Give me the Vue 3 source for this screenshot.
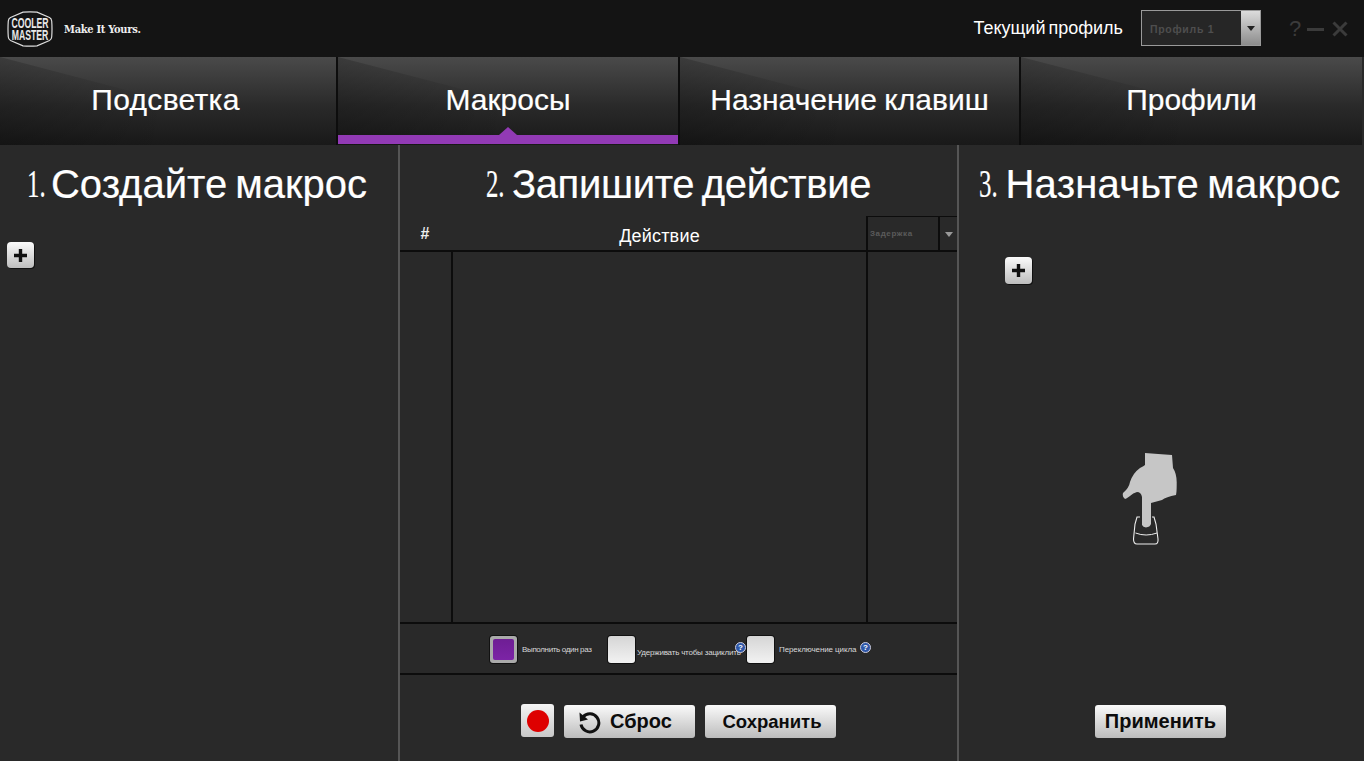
<script setup>
const tabs = [
  { label: 'Подсветка', cls: 't1' },
  { label: 'Макросы', cls: 't2', active: true },
  { label: 'Назначение клавиш', cls: 't3' },
  { label: 'Профили', cls: 't4' }
]
</script>

<template>
  <div class="app">
    <header class="top">
      <svg class="logo" viewBox="0 0 46 36" width="46" height="36">
        <path d="M16 1.200Q23 .4 30 1.200L42.500 6.500Q44.500 7.500 44.700 10 45.300 18 44.700 26 44.500 28.500 42.500 29.500L30 34.800Q23 35.600 16 34.800L3.500 29.500Q1.500 28.500 1.300 26 .7 18 1.300 10 1.500 7.500 3.500 6.500Z" fill="none" stroke="#ddd" stroke-width="1.200"/>
        <text transform="translate(23 16.500) scale(.56 1)" text-anchor="middle" class="logo-t">COOLER</text>
        <text transform="translate(23 28.500) scale(.56 1)" text-anchor="middle" class="logo-t">MASTER</text>
      </svg>
      <span class="slogan">Make It Yours.</span>
      <span class="spacer"></span>
      <span class="cur">Текущий профиль</span>
      <div class="select">
        <span class="sel-text">Профиль 1</span>
        <span class="sel-btn"><i class="tri"></i></span>
      </div>
      <div class="winbtns">
        <span class="q">?</span>
        <svg width="18" height="18" viewBox="0 0 18 18"><rect x="0" y="8" width="17" height="3" fill="#3b3b3b"/></svg>
        <svg class="xicon" width="16" height="18" viewBox="0 0 16 18"><path d="M1.500 2.500 14.500 15.500M14.500 2.500 1.500 15.500" stroke="#3b3b3b" stroke-width="3"/></svg>
      </div>
    </header>

    <nav class="tabs">
      <div v-for="t in tabs" :key="t.label" class="tab" :class="[t.cls, { active: t.active }]">
        <span class="tab-label">{{ t.label }}</span>
        <i v-if="t.active" class="notch"></i>
      </div>
    </nav>

    <main class="cols">
      <section class="col left">
        <h2 class="head"><span class="num">1.</span><span>Создайте макрос</span></h2>
        <button class="plus plus-left"><svg width="15" height="15" viewBox="0 0 15 15"><path d="M5.800 1h3.400v4.800H14v3.400H9.200V14H5.800V9.200H1V5.800h4.800Z" fill="#111"/></svg></button>
      </section>

      <section class="col mid">
        <h2 class="head"><span class="num">2.</span><span>Запишите действие</span></h2>
        <div class="thead">
          <span class="th-num">#</span>
          <span class="th-act">Действие</span>
          <div class="th-delay">
            <span class="delay-text">Задержка</span>
            <span class="delay-btn"><i class="tri small"></i></span>
          </div>
        </div>
        <div class="tbody">
          <div class="c-num"></div>
          <div class="c-act"></div>
          <div class="c-delay"></div>
        </div>
        <div class="opts">
          <span class="check on"><i></i></span>
          <span class="opt-t o1">Выполнить один раз</span>
          <span class="check"></span>
          <span class="opt-t o2">Удерживать чтобы зациклить</span>
          <span class="help h1">?</span>
          <span class="check c3"></span>
          <span class="opt-t o3">Переключение цикла</span>
          <span class="help h2">?</span>
        </div>
        <div class="actions">
          <button class="btn rec"><i></i></button>
          <button class="btn wide reset">
            <svg width="24" height="24" viewBox="0 0 24 24"><path d="M6 7A9 9 0 1 1 4 14.500" fill="none" stroke="#111" stroke-width="3"/><path d="M2.500 2.500 3 11.500 11 9.500Z" fill="#111"/></svg>
            <span>Сброс</span>
          </button>
          <button class="btn wide save">Сохранить</button>
        </div>
      </section>

      <section class="col right">
        <h2 class="head"><span class="num">3.</span><span>Назначьте макрос</span></h2>
        <button class="plus plus-right"><svg width="15" height="15" viewBox="0 0 15 15"><path d="M5.800 1h3.400v4.800H14v3.400H9.200V14H5.800V9.200H1V5.800h4.800Z" fill="#111"/></svg></button>
        <svg class="hand" width="100" height="120" viewBox="0 0 100 120">
          <path d="M40 77 37 77 35 84 33.500 99Q33.500 104 37 104H55Q58.500 104 58 99L56 84 54 77 52 77" fill="none" stroke="#eee" stroke-width="1.100"/>
          <path d="M35.500 93Q46 97 57 93" fill="none" stroke="#eee" stroke-width="1"/>
          <path d="M45 13Q58 14 72 15L73 28Q77 34 76.700 44 76.700 52 76 55 66 57 62 60L51 63 51 84Q50 87 46 87.500 43 87 42 85L42 57Q41 52 37 52 33 53 30 56 26 59 25 59 22 57 23 53 29 48 30 42 33 33 40 28 44 26 45 25Z" fill="#c6c6c6"/>
        </svg>
        <button class="btn wide apply">Применить</button>
      </section>
    </main>
  </div>
</template>

<style>
html, body { margin: 0; background: #292929; overflow: hidden; }
</style>

<style scoped>
.app { width: 1364px; height: 761px; display: flex; flex-direction: column; background: #292929; font-family: "Liberation Sans", Arial, sans-serif; color: #fff; overflow: hidden; }
.top { height: 57px; flex: none; display: flex; align-items: center; background: #141414; padding-left: 7px; box-sizing: border-box; }
.logo { flex: none; margin-right: 11px; margin-top: 1px; }
.logo-t { font: bold 15.500px "Liberation Sans", sans-serif; fill: #e8e8e8; }
.slogan { font: bold 11px "DejaVu Serif", serif; font-stretch: condensed; color: #eee; margin-top: 1px; letter-spacing: -.3px; white-space: nowrap; }
.spacer { flex: 1; }
.cur { font-size: 18px; word-spacing: -2px; margin-right: 18px; color: #fff; }
.select { width: 120px; height: 36px; box-sizing: border-box; border: 1px solid #9a9a9a; display: flex; align-items: stretch; background: #262626; margin-top: -1px; }
.sel-text { flex: 1; padding-left: 8px; font-size: 10.5px; font-weight: bold; color: #4e4e4e; letter-spacing: .7px; line-height: 36px; }
.sel-btn { width: 19px; background: linear-gradient(#dcdcdc, #8c8c8c); display: flex; align-items: center; justify-content: center; }
.tri { display: block; width: 0; height: 0; border-left: 4px solid transparent; border-right: 4px solid transparent; border-top: 5px solid #222; }
.tri.small { border-top-color: #999; }
.winbtns { display: flex; align-items: center; gap: 3px; width: 103px; padding-left: 28px; box-sizing: border-box; }
.q { font-size: 22px; color: #3b3b3b; width: 15px; }
.xicon { margin-left: 4px; }

.tabs { height: 88px; flex: none; display: flex; width: 1362px; gap: 2px; background: #0d0d0d; }
.tab { position: relative; flex: none; box-sizing: border-box; display: flex; align-items: center; justify-content: center; background: linear-gradient(#4a4a4a, #2a2a2a 55%, #191919); overflow: hidden; padding-bottom: 2px; }
.tab::before { content: ""; position: absolute; inset: 0 50% 0 0; background: linear-gradient(to right, rgba(0,0,0,.2), transparent); clip-path: polygon(0 0, 100% 50%, 100% 100%, 0 100%); }
.t1 { width: 336px; padding-right: 5px; }
.t2 { width: 340px; }
.t3 { width: 339px; }
.t4 { width: 341px; }
.tab-label { position: relative; font-size: 30px; word-spacing: -1px; -webkit-text-stroke: .2px #fff; }
.t1 .tab-label { letter-spacing: .3px; }
.active::after { content: ""; position: absolute; left: 0; right: 0; bottom: 1px; height: 9px; background: #923ab5; }
.notch { position: absolute; left: 50%; margin-left: -9px; bottom: 10px; border-left: 9px solid transparent; border-right: 9px solid transparent; border-bottom: 8px solid #923ab5; }

.cols { flex: 1; display: flex; min-height: 0; }
.col { display: flex; flex-direction: column; box-sizing: border-box; position: relative; }
.left { width: 400px; border-right: 2px solid #555; padding-left: 7px; }
.mid { width: 559px; border-right: 2px solid #555; }
.right { flex: 1; }
.head { margin: 0; height: 71px; display: flex; justify-content: center; line-height: 78px; font-size: 40px; font-weight: normal; word-spacing: -3px; white-space: nowrap; flex: none; -webkit-text-stroke: .2px #fff; }
.left .head { margin-left: -7px; padding-right: 4px; }
.mid .head { letter-spacing: -.35px; }
.right .head { letter-spacing: .25px; padding-right: 3px; }
.num { font-family: "Liberation Serif", serif; width: 24px; display: block; transform: scaleX(.62); transform-origin: left center; }
.mid .num, .right .num { width: 26px; }
.plus { width: 27px; height: 26px; padding: 0; border: 0; border-radius: 4px; background: linear-gradient(#fbfbfb, #bdbdbd); box-shadow: 1px 1px 0 #111; display: flex; align-items: center; justify-content: center; }
.plus-left { margin-top: 26px; }
.plus-right { margin: 41px 0 0 46px; height: 27px; }

.thead { height: 36px; flex: none; display: flex; box-sizing: border-box; border-bottom: 2px solid #0c0c0c; align-items: stretch; }
.th-num { width: 52px; text-align: center; line-height: 35px; font-size: 16px; font-weight: bold; color: #eee; margin-left: -1px; }
.th-act { width: 415px; text-align: center; line-height: 40px; font-size: 18px; letter-spacing: .2px; padding-left: 2px; box-sizing: border-box; }
.th-delay { flex: 1; display: flex; border-left: 2px solid #0c0c0c; border-top: 1px solid #0c0c0c; }
.delay-text { width: 68px; border-right: 2px solid #0c0c0c; padding-left: 2px; font-size: 8px; font-weight: bold; color: #5b5b5b; letter-spacing: .6px; line-height: 33px; }
.delay-btn { flex: 1; display: flex; align-items: center; justify-content: center; padding-top: 2px; }
.tbody { flex: 1; display: flex; min-height: 0; }
.c-num { width: 51px; border-right: 2px solid #0c0c0c; }
.c-act { width: 413px; border-right: 2px solid #0c0c0c; }
.c-delay { flex: 1; }

.opts { height: 53px; flex: none; box-sizing: border-box; border-top: 2px solid #0c0c0c; border-bottom: 2px solid #0c0c0c; display: flex; align-items: center; padding-left: 90px; }
.check { width: 27px; height: 27px; flex: none; box-sizing: border-box; border-radius: 3px; background: linear-gradient(#d5d5d5, #f2f2f2); box-shadow: 0 0 0 1px #111; margin-top: 1px; }
.check.on { background: #aaa; padding: 3px; }
.check.on i { display: block; height: 100%; background: linear-gradient(#6e1e94, #7c24a6); border-radius: 2px; }
.opt-t { font-size: 8px; color: #d8d8d8; white-space: nowrap; }
.o1 { margin: 1px 15px 0 5px; width: 71px; letter-spacing: -.35px; }
.o2 { margin: 7px 0 0 2px; width: 98px; letter-spacing: -.2px; }
.o3 { margin: 1px 0 0 5px; width: 79px; letter-spacing: -.1px; }
.help { width: 11px; height: 11px; flex: none; border-radius: 50%; background: #2e57a8; border: 1px solid #ccd; box-sizing: border-box; font-size: 8px; font-weight: bold; line-height: 9px; text-align: center; color: #fff; margin-top: -2px; }
.h1 { margin-right: 1px; }
.h2 { margin-left: 2px; }

.actions { height: 86px; flex: none; display: flex; align-items: flex-start; padding: 30px 0 0 121px; box-sizing: border-box; gap: 10px; }
.btn { padding: 0; border: 0; border-radius: 3px; background: linear-gradient(#fafafa, #bcbcbc); color: #0c0c0c; font: bold 18.500px "Liberation Sans", sans-serif; height: 33px; display: flex; align-items: center; justify-content: center; white-space: nowrap; }
.wide { width: 131px; }
.save { padding-left: 3px; }
.rec { width: 33px; height: 33px; margin-top: -1px; background: linear-gradient(#f4f4f4, #c8c8c8); }
.rec i { display: block; width: 22px; height: 22px; border-radius: 50%; background: #de0000; }
.reset { justify-content: flex-start; padding-left: 13px; }
.reset span { margin-left: 9px; font-size: 20px; }
.hand { position: absolute; left: 141px; top: 295px; }
.apply { position: absolute; left: 136px; top: 560px; font-size: 20px; }
</style>
